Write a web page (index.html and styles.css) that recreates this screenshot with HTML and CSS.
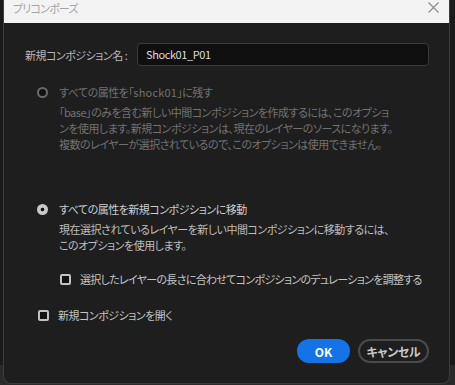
FILE: index.html
```html
<!DOCTYPE html>
<html lang="ja">
<head>
<meta charset="utf-8">
<title>プリコンポーズ</title>
<link rel="stylesheet" href="styles.css">
</head>
<body>
<div class="dialog">
  <div class="titlebar">
    <span class="title">プリコンポーズ</span>
    <svg class="close" width="11" height="11" viewBox="0 0 11 11"><path d="M0.5 0.5 L10.5 10.5 M10.5 0.5 L0.5 10.5" stroke="#8a8a8a" stroke-width="1.1" fill="none"/></svg>
  </div>
  <div class="content">
    <div class="name-row">
      <label class="name-label">新規コンポジション名 :</label>
      <div class="input">Shock01_P01</div>
    </div>

    <div class="option disabled opt1">
      <div class="option-head"><span class="radio"></span><span>すべての属性を「<span class="latin">shock01</span>」に残す</span></div>
      <div class="desc">「base」のみを含む新しい中間コンポジションを作成するには、このオプショ<br>ンを使用します。新規コンポジションは、現在のレイヤーのソースになります。<br>複数のレイヤーが選択されているので、このオプションは使用できません。</div>
    </div>

    <div class="option opt2">
      <div class="option-head"><span class="radio checked"></span><span>すべての属性を新規コンポジションに移動</span></div>
      <div class="desc">現在選択されているレイヤーを新しい中間コンポジションに移動するには、<br>このオプションを使用します。</div>
      <div class="check-row sub"><span class="checkbox"></span><span class="tight">選択したレイヤーの長さに合わせてコンポジションのデュレーションを調整する</span></div>
    </div>

    <div class="check-row open"><span class="checkbox"></span><span>新規コンポジションを開く</span></div>

    <div class="buttons">
      <button class="btn primary">OK</button>
      <button class="btn secondary">キャンセル</button>
    </div>
  </div>
</div>
</body>
</html>
```

FILE: styles.css
```css
html, body {
  margin: 0;
  padding: 0;
}
body {
  width: 455px;
  height: 385px;
  background: linear-gradient(to bottom, #1a1a1a 0, #1a1a1a 365px, #2a2a2a 365px, #2a2a2a 385px);
  font-family: "Noto Sans CJK JP", "Noto Sans", sans-serif;
  font-feature-settings: "palt";
  font-size: 11px;
  letter-spacing: -0.5px;
  overflow: hidden;
}
.dialog {
  margin-left: 3px;
  width: 445px;
  height: 383px;
  border: 1px solid #3c3c3c;
  border-top: none;
  border-radius: 0 0 8px 8px;
  background: #1e1e1e;
  display: flex;
  flex-direction: column;
  box-sizing: content-box;
}
.titlebar {
  height: 23px;
  background: #f3f3f3;
  display: flex;
  justify-content: space-between;
  align-items: flex-start;
  padding: 0 10px 0 9px;
}
.title {
  color: #a3a3a3;
  line-height: 16px;
  font-size: 11px;
  letter-spacing: -0.8px;
}
.close {
  margin-top: 2px;
}
.content {
  padding: 20px 20px 0 21px;
  display: flex;
  flex-direction: column;
}
.name-row {
  display: flex;
  align-items: center;
  height: 23px;
}
.name-label {
  width: 112px;
  flex: none;
  color: #b8b8b8;
  line-height: 16px;
  white-space: nowrap;
}
.input {
  flex: 1;
  height: 23px;
  box-sizing: border-box;
  background: #0f0f0f;
  border: 1px solid #3a3a3a;
  border-radius: 4px;
  color: #dcdcdc;
  padding-left: 8px;
  line-height: 21px;
  letter-spacing: -0.4px;
}
.option {
  display: flex;
  flex-direction: column;
}
.opt1 { margin-top: 18px; }
.opt2 { margin-top: 49px; }
.option-head {
  display: flex;
  align-items: center;
  line-height: 16px;
  color: #cdcdcd;
  padding-left: 12px;
  white-space: nowrap;
}
.latin {
  letter-spacing: 0.2px;
}
.radio {
  width: 11px;
  height: 11px;
  box-sizing: border-box;
  border-radius: 50%;
  margin-right: 11px;
  flex: none;
}
.disabled .radio {
  border: 2px solid #6b6b6b;
  background: #111;
}
.radio.checked {
  background: radial-gradient(circle, #141414 0, #141414 1.6px, #c8c8c8 2.2px);
}
.desc {
  margin-top: 4px;
  padding-left: 34px;
  line-height: 16px;
  color: #bdbdbd;
  white-space: nowrap;
}
.disabled .option-head, .disabled .desc {
  color: #727272;
}
.check-row {
  display: flex;
  align-items: center;
  line-height: 16px;
  color: #c4c4c4;
  white-space: nowrap;
}
.tight {
  letter-spacing: -0.7px;
}
.checkbox {
  width: 11px;
  height: 11px;
  box-sizing: border-box;
  border: 2px solid #c2c2c2;
  border-radius: 2px;
  background: #111;
  margin-right: 9px;
  flex: none;
}
.check-row.sub {
  margin-top: 18px;
  padding-left: 35px;
}
.check-row.open {
  margin-top: 20px;
  padding-left: 13px;
}
.buttons {
  margin-top: 16px;
  display: flex;
  justify-content: flex-end;
  gap: 8px;
}
.btn {
  height: 24px;
  border-radius: 12px;
  font-family: "Noto Sans CJK JP", "Noto Sans", sans-serif;
  font-feature-settings: "palt";
  font-size: 12px;
  font-weight: bold;
  padding: 0;
  box-sizing: border-box;
  cursor: default;
}
.primary {
  width: 53px;
  background: #1473e6;
  color: #fff;
  border: none;
}
.secondary {
  width: 71px;
  background: transparent;
  color: #c8c8c8;
  border: 2px solid #4a4a4a;
  letter-spacing: -0.3px;
}
```
